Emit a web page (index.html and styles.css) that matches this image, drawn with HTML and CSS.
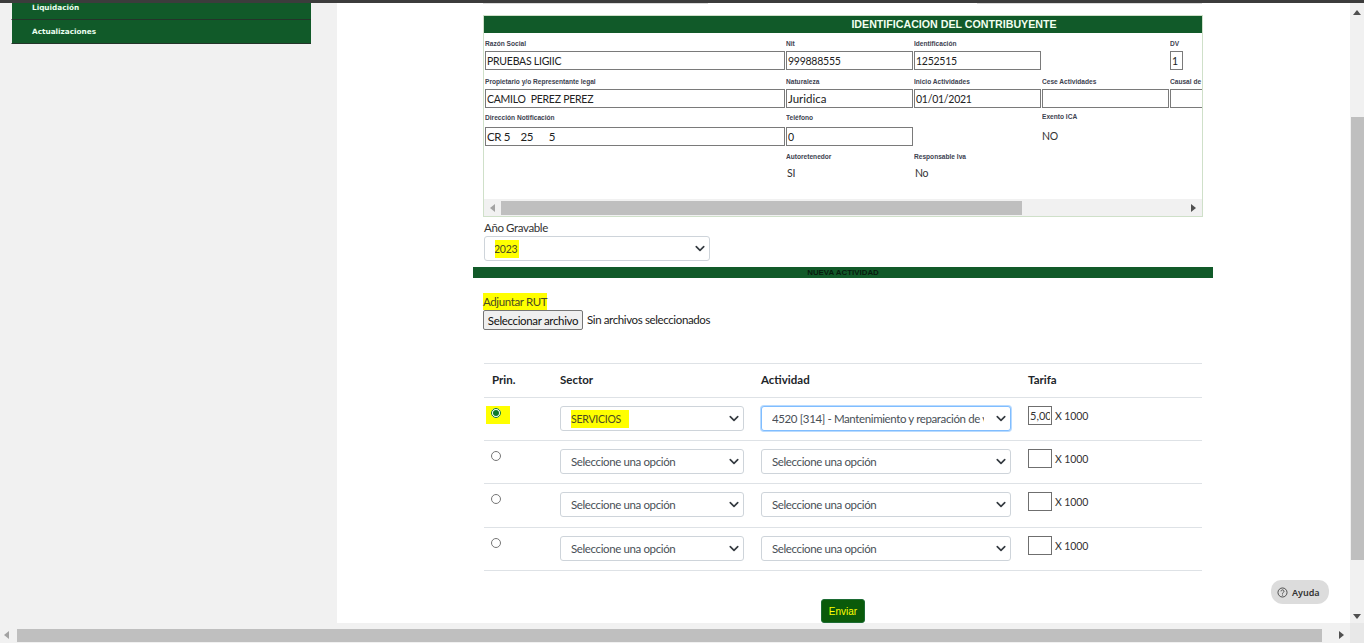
FILE: index.html
```html
<!DOCTYPE html>
<html lang="es">
<head>
<meta charset="utf-8">
<title>Identificación del contribuyente</title>
<link rel="stylesheet" href="styles.css">
</head>
<body>
<div class="topline"></div>
<div class="viewport">
  <aside class="sidebar">
    <nav class="menu">
      <a class="menu-item first">Liquidación</a>
      <a class="menu-item last">Actualizaciones</a>
    </nav>
  </aside>
  <main class="content">
    <div class="wrap">
      <div class="strip"><span></span><span></span></div>
      <section class="panel">
        <h2 class="panel-title"><span>IDENTIFICACION DEL CONTRIBUYENTE</span></h2>
        <div class="panel-body">
          <div class="row row-a">
            <div class="f w-wide"><label>Razón Social</label><input class="box" readonly value="PRUEBAS LIGIIC"></div>
            <div class="f w-n"><label>Nit</label><input class="box" readonly value="999888555"></div>
            <div class="f w-n"><label>Identificación</label><input class="box" readonly value="1252515"></div>
            <div class="f w-n"></div>
            <div class="f w-n"><label>DV</label><input class="box box-dv" readonly value="1"></div>
          </div>
          <div class="row row-b">
            <div class="f w-wide"><label>Propietario y/o Representante legal</label><input class="box" readonly value="CAMILO  PEREZ PEREZ"></div>
            <div class="f w-n"><label>Naturaleza</label><input class="box box-lc" readonly value="Juridica"></div>
            <div class="f w-n"><label>Inicio Actividades</label><input class="box" readonly value="01/01/2021"></div>
            <div class="f w-n"><label>Cese Actividades</label><input class="box" readonly></div>
            <div class="f w-causal"><label>Causal de</label><input class="box" readonly></div>
          </div>
          <div class="row row-c">
            <div class="f w-wide"><label>Dirección Notificación</label><input class="box box-sp" readonly value="CR 5    25      5"></div>
            <div class="f w-n"><label>Teléfono</label><input class="box" readonly value="0"></div>
            <div class="f w-n"></div>
            <div class="f w-n f-up"><label>Exento ICA</label><div class="plain">NO</div></div>
          </div>
          <div class="row row-d">
            <div class="f w-wide"></div>
            <div class="f w-n"><label>Autoretenedor</label><div class="plain">SI</div></div>
            <div class="f w-n"><label>Responsable Iva</label><div class="plain">No</div></div>
          </div>
        </div>
        <div class="hscroll">
          <span class="arrow a-left"></span>
          <div class="hscroll-track"><div class="hscroll-thumb"></div></div>
          <span class="arrow a-right"></span>
        </div>
      </section>

      <div class="year">
        <div class="year-label">Año Gravable</div>
        <div class="select year-select"><span class="txt"><mark class="m-year">2023</mark></span><svg class="chev" viewBox="0 0 16 10"><path d="M2 2l6 6 6-6" fill="none" stroke="#343a40" stroke-width="2.6" stroke-linecap="round" stroke-linejoin="round"/></svg></div>
      </div>

      <div class="bar">NUEVA ACTIVIDAD</div>

      <div class="attach">
        <div class="attach-label"><mark>Adjuntar RUT</mark></div>
        <div class="attach-row"><button class="file-btn" type="button">Seleccionar archivo</button><span class="file-name">Sin archivos seleccionados</span></div>
      </div>

      <table class="grid">
        <thead>
          <tr><th class="c1">Prin.</th><th class="c2">Sector</th><th class="c3">Actividad</th><th class="c4">Tarifa</th></tr>
        </thead>
        <tbody>
          <tr>
            <td><span class="radio-hl"><input class="radio" type="radio" name="p0" checked></span></td>
            <td><div class="select"><span class="txt"><mark class="m-sector">SERVICIOS</mark></span><svg class="chev" viewBox="0 0 16 10"><path d="M2 2l6 6 6-6" fill="none" stroke="#343a40" stroke-width="2.6" stroke-linecap="round" stroke-linejoin="round"/></svg></div></td>
            <td><div class="select focus"><span class="txt">4520 [314] - Mantenimiento y reparación de vehículos</span><svg class="chev" viewBox="0 0 16 10"><path d="M2 2l6 6 6-6" fill="none" stroke="#343a40" stroke-width="2.6" stroke-linecap="round" stroke-linejoin="round"/></svg></div></td>
            <td><div class="rate"><input class="rate-in" readonly value="5,00"><span>X 1000</span></div></td>
          </tr>
          <tr>
            <td><span class="radio-pl"><input class="radio" type="radio" name="p1"></span></td>
            <td><div class="select"><span class="txt">Seleccione una opción</span><svg class="chev" viewBox="0 0 16 10"><path d="M2 2l6 6 6-6" fill="none" stroke="#343a40" stroke-width="2.6" stroke-linecap="round" stroke-linejoin="round"/></svg></div></td>
            <td><div class="select"><span class="txt">Seleccione una opción</span><svg class="chev" viewBox="0 0 16 10"><path d="M2 2l6 6 6-6" fill="none" stroke="#343a40" stroke-width="2.6" stroke-linecap="round" stroke-linejoin="round"/></svg></div></td>
            <td><div class="rate"><input class="rate-in" readonly><span>X 1000</span></div></td>
          </tr>
          <tr>
            <td><span class="radio-pl"><input class="radio" type="radio" name="p2"></span></td>
            <td><div class="select"><span class="txt">Seleccione una opción</span><svg class="chev" viewBox="0 0 16 10"><path d="M2 2l6 6 6-6" fill="none" stroke="#343a40" stroke-width="2.6" stroke-linecap="round" stroke-linejoin="round"/></svg></div></td>
            <td><div class="select"><span class="txt">Seleccione una opción</span><svg class="chev" viewBox="0 0 16 10"><path d="M2 2l6 6 6-6" fill="none" stroke="#343a40" stroke-width="2.6" stroke-linecap="round" stroke-linejoin="round"/></svg></div></td>
            <td><div class="rate"><input class="rate-in" readonly><span>X 1000</span></div></td>
          </tr>
          <tr>
            <td><span class="radio-pl"><input class="radio" type="radio" name="p3"></span></td>
            <td><div class="select"><span class="txt">Seleccione una opción</span><svg class="chev" viewBox="0 0 16 10"><path d="M2 2l6 6 6-6" fill="none" stroke="#343a40" stroke-width="2.6" stroke-linecap="round" stroke-linejoin="round"/></svg></div></td>
            <td><div class="select"><span class="txt">Seleccione una opción</span><svg class="chev" viewBox="0 0 16 10"><path d="M2 2l6 6 6-6" fill="none" stroke="#343a40" stroke-width="2.6" stroke-linecap="round" stroke-linejoin="round"/></svg></div></td>
            <td><div class="rate"><input class="rate-in" readonly><span>X 1000</span></div></td>
          </tr>
        </tbody>
      </table>

      <div class="actions"><button class="send" type="button">Enviar</button></div>
    </div>
    <button class="help" type="button"><svg class="help-ic" viewBox="0 0 16 16"><circle cx="8" cy="8" r="6.6" fill="none" stroke="#333" stroke-width="1.2"/><path d="M5.9 6.3a2.1 2.1 0 1 1 3.3 1.7c-.8.5-1.2.9-1.2 1.7" fill="none" stroke="#333" stroke-width="1.2"/><circle cx="8" cy="11.6" r=".8" fill="#333"/></svg><span>Ayuda</span></button>
  </main>
  <div class="vscroll">
    <span class="arrow a-up"></span>
    <div class="vscroll-track"><div class="vscroll-thumb"></div></div>
    <span class="arrow a-down"></span>
  </div>
</div>
<div class="bottom-scroll">
  <span class="arrow a-left"></span>
  <div class="bottom-track"><div class="bottom-thumb"></div></div>
  <span class="arrow a-right"></span>
  <span class="corner"></span>
</div>
</body>
</html>
```
FILE: styles.css
```css
* { box-sizing: border-box; }
html, body { margin: 0; padding: 0; height: 100%; overflow: hidden; }
body {
  width: 1364px; height: 643px;
  display: flex; flex-direction: column;
  background: #f1f1f1; color: #212529;
  font-family: Lato, "Noto Sans", sans-serif; font-size: 11.5px;
}
mark { background: #ffff00; color: #4a4a22; padding: 2px 0; }

.topline { height: 3px; flex: none; background: #3c3c3c; }
.viewport { flex: none; height: 620px; display: flex; position: relative; }

/* sidebar */
.sidebar { width: 337px; flex: none; background: #f1f1f1; padding-left: 11px; }
.menu { width: 300px; }
.menu-item {
  display: block; background: #115a29; background-clip: padding-box; color: #eafff0;
  font: bold 7.3px/1 "DejaVu Sans", sans-serif;
  padding-left: 20px; border-left: 1px solid transparent; border-bottom: 1px solid #24352a;
}
.menu-item.first { height: 17px; padding-top: 1px; }
.menu-item.last { height: 24px; padding-top: 8px; }

/* content */
.content { width: 1013px; flex: none; background: #fff; overflow: hidden; position: relative; }
.wrap { width: 740px; margin-left: 136px; }
.strip { display: flex; justify-content: space-between; height: 1px; margin: 0 11px 0 10px; }
.strip span { width: 225px; background: #dcdcdc; }

.panel {
  margin: 11px 10px 0; height: 202px; width: 720px;
  border: 1px solid #cfe0c9; display: flex; flex-direction: column; overflow: hidden;
}
.panel-title {
  flex: none; height: 17px; margin: 0; background: #115a29; color: #f2fff0;
  font: bold 10.67px/17px "Liberation Sans", sans-serif; overflow: hidden;
}
.panel-title span { display: block; width: 940px; text-align: center; }
.panel-body { flex: 1; padding-left: 1px; overflow: hidden; }
.row { display: flex; width: 718px; }
.f { flex: none; }
.w-wide { width: 301px; }
.w-n { width: 128px; }
.w-causal { width: 32px; }
.f label {
  display: block; height: 13px; white-space: nowrap; overflow: hidden;
  font: bold 6.6px/12px "Liberation Sans", sans-serif; color: #3d4250;
}
.box {
  display: block; width: calc(100% - 1px); height: 19px; padding: 0 1px;
  border: 1px solid #7a7a7a; border-radius: 0; background: #fff; color: #222;
  font: 10.5px/17px Lato, "Noto Sans", sans-serif; letter-spacing: -.25px; white-space: pre; outline: none;
}
.box-lc { font-size: 11.5px; letter-spacing: 0; }
.box-sp { font-size: 11.5px; letter-spacing: -.35px; }
.w-n .box { width: 127px; }
.w-causal .box { width: 40px; }
.w-n .box-dv { width: 13px; }
.plain { font-size: 10.5px; letter-spacing: -.25px; color: #333; }
.row-a { height: 37px; padding-top: 5px; }
.row-b { height: 38px; padding-top: 6px; }
.row-c { height: 42px; padding-top: 4px; }
.row-c label { height: 15px; }
.f-up label { margin-top: -1px; height: 14px; }
.f-up .plain { margin-top: 3px; line-height: 17px; }
.row-d { height: 50px; padding-top: 1px; }
.row-d .plain { margin-top: 1px; line-height: 17px; padding-left: 1px; }

.hscroll { flex: none; height: 17px; display: flex; align-items: center; background: #f1f1f1; }
.hscroll-track { flex: 1; height: 14px; }
.hscroll-thumb { width: 521px; height: 14px; background: #bfbfbf; }
.arrow { flex: none; display: block; width: 0; height: 0; border-style: solid; border-color: transparent; }
.hscroll .a-left { border-width: 4px 5px 4px 0; border-right-color: #a3a3a3; margin: 0 6px 0 6px; }
.hscroll .a-right { border-width: 4px 0 4px 5px; border-left-color: #505050; margin: 0 6px; }

/* year */
.year { margin: 4px 0 0 11px; }
.year-label { height: 15px; line-height: 14px; color: #333; letter-spacing: -.38px; }
.select {
  height: 25px; display: flex; align-items: center; gap: 12px;
  border: 1px solid #ced4da; border-radius: 3px; background: #fff;
  padding: 0 4px 0 10px; color: #495057;
}
.txt { flex: 1; min-width: 0; overflow: hidden; white-space: nowrap; line-height: 23px; letter-spacing: -.38px; }
.chev { width: 10px; height: 7px; flex: none; }
.year-select { width: 226px; }
.m-year, .m-sector { font-size: 10.5px; letter-spacing: -.25px; }
.m-year { margin-left: -4px; padding: 3px 2px 3px 3px; }
.m-sector { margin-left: -5px; padding: 3px 8px 3px 5px; }
.focus { border-color: #80bdff; box-shadow: 0 0 0 1px rgba(128, 189, 255, .55); }

.bar {
  margin-top: 6px; height: 11px; background: #115a29; color: #071b0e; text-align: center;
  font: bold 7.9px/12px "Liberation Sans", sans-serif;
}

.attach { margin: 16px 0 0 10px; }
.attach-label { height: 16px; line-height: 15px; letter-spacing: -.38px; }
.attach-row { display: flex; align-items: center; height: 20px; }
.file-btn {
  width: 100px; height: 20px; padding: 0; border: 1px solid #767676; border-radius: 2px;
  background: #efefef; color: #111; font: 11.5px Lato, "Noto Sans", sans-serif;
  letter-spacing: -.34px; white-space: nowrap;
}
.file-name { margin-left: 4px; padding-bottom: 2px; color: #222; letter-spacing: -.38px; }

/* table */
.grid {
  border-collapse: collapse; table-layout: fixed; width: 718px; margin: 33px 0 0 11px;
}
.c1 { width: 68px; } .c2 { width: 200px; } .c3 { width: 267px; } .c4 { width: 183px; }
.grid th {
  height: 34px; padding: 0 8px 2px; text-align: left; font-size: 11.5px; font-weight: 700; color: #212529;
  border-top: 1px solid #dee2e6; border-bottom: 1px solid #dee2e6;
}
.grid td { height: 43px; padding: 8px; vertical-align: top; border-bottom: 1px solid #dee2e6; }
.grid tbody tr:nth-child(3) td { height: 44px; }
.grid td .select { height: 25px; }
.grid td:nth-child(2) .select { width: 184px; }
.grid td:nth-child(3) .select { width: 250px; margin-left: 1px; }
.grid th.c3, .grid th.c4 { padding-left: 9px; }
.radio-hl, .radio-pl { display: block; width: 24px; height: 18px; margin-left: -6px; padding: 2px 0 0 5px; }
.radio-hl { background: #ffff00; }
.radio { display: block; width: 10px; height: 10px; margin: 0; accent-color: #0f7a2b; }
.rate { display: flex; gap: 3px; margin-left: 1px; line-height: 19px; color: #333; font-size: 10.5px; }
.rate span { padding-top: 1px; letter-spacing: -.1px; }
.rate-in {
  width: 24px; height: 19px; padding: 0 1px; border: 1px solid #6f6f6f; border-radius: 0;
  font: 11px Lato, "Noto Sans", sans-serif; color: #333; outline: none;
}

.actions { display: flex; justify-content: center; margin-top: 28px; }
.send {
  width: 44px; height: 24px; padding: 0; background: #0a5a0a; color: #ffff00;
  border: 1px solid #1c6b34; border-radius: 3px; font: 10px "Liberation Sans", sans-serif;
}

.help {
  position: absolute; left: 934px; top: 577px; width: 58px; height: 24px;
  display: flex; align-items: center; gap: 4px; padding: 0 0 0 6px;
  border: 0; border-radius: 10px 10px 12px 12px; background: #dcdcdc; color: #333;
  font: 600 9px "Noto Sans", sans-serif;
}
.help-ic { width: 11px; height: 11px; flex: none; }

/* page scrollbars */
.vscroll { flex: none; width: 14px; background: #f1f1f1; display: flex; flex-direction: column; align-items: center; }
.vscroll-track { flex: 1; width: 100%; padding-top: 95px; }
.vscroll-thumb { width: 13px; height: 443px; margin-left: 1px; background: #bfbfbf; }
.a-up { border-width: 0 4px 5px; border-bottom-color: #505050; margin: 7px 0; }
.a-down { border-width: 5px 4px 0; border-top-color: #505050; margin: 7px 0 4px; }
.bottom-scroll { flex: none; height: 20px; display: flex; align-items: flex-start; background: #f1f1f1; }
.bottom-track { flex: none; width: 1305px; margin: 6px 0 0 8px; }
.bottom-thumb { height: 13px; background: #bfbfbf; }
.bottom-scroll .a-left { border-width: 4px 5px 4px 0; border-right-color: #a3a3a3; margin: 8px 0 0 4px; }
.bottom-scroll .a-right { border-width: 4px 0 4px 5px; border-left-color: #505050; margin: 8px 0 0 17px; }
.corner { flex: none; width: 14px; height: 20px; margin-left: auto; background: #e8e8e8; }
```
